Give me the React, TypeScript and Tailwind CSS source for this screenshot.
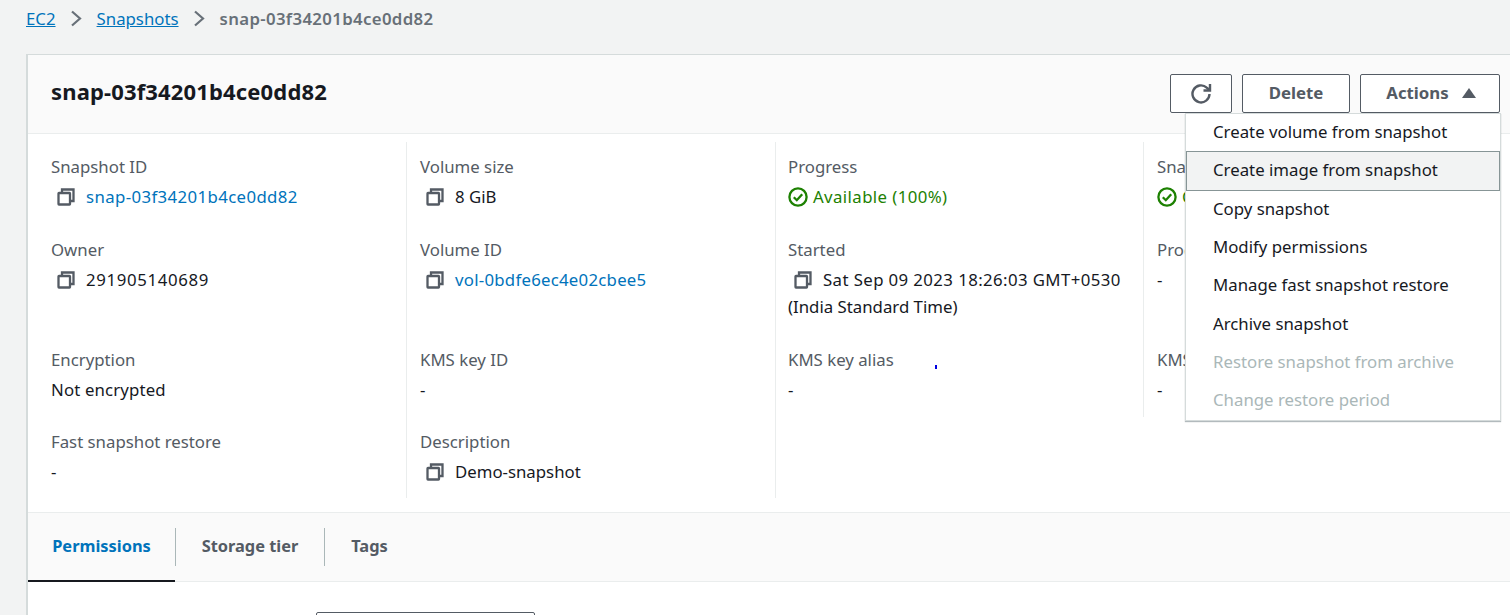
import { ReactNode } from "react"

function CopyIcon() {
    return (
        <svg viewBox="0 0 18 18" className="h-[18px] w-[18px] shrink-0 text-[#545b64]" fill="none" stroke="currentColor" strokeWidth="2.3">
            <rect x="1.5" y="5" width="11.5" height="11.5" rx="0.5" />
            <path d="M5 4V1.5h11.5V13H14" />
        </svg>
    )
}

function CheckIcon() {
    return (
        <svg viewBox="0 0 20 20" className="h-5 w-5 shrink-0 text-[#1d8102]" fill="none" stroke="currentColor" strokeWidth="2.3">
            <circle cx="10" cy="10" r="8.6" />
            <path d="M5.8 10.2l3 3 5.4-6" />
        </svg>
    )
}

function Chevron() {
    return (
        <svg viewBox="0 0 12 17" className="ml-[14px] mr-[15px] mt-[1px] h-[17px] w-3 text-[#687078]" fill="none" stroke="currentColor" strokeWidth="2.2">
            <path d="M2 1.5l8 7-8 7" />
        </svg>
    )
}

function Field({ label, children, className = "" }: { label?: string; children?: ReactNode; className?: string }) {
    return (
        <div className={`pt-[15px] ${className}`}>
            {label && <div className="h-5 leading-5 text-[#545b64]">{label}</div>}
            {children && <div className="mt-[10px] leading-5 text-[#16191f]">{children}</div>}
        </div>
    )
}

function Copyable({ text, link, className = "" }: { text: string; link?: boolean; className?: string }) {
    return (
        <div className="flex items-center pl-[6px]">
            <CopyIcon />
            <span className={`ml-[11px] whitespace-nowrap ${link ? "text-[#0073bb]" : ""} ${className}`}>{text}</span>
        </div>
    )
}

const cell = "border-l border-[#eaeded] pl-[13px]"
const cellThird = "border-l border-[#eaeded] pl-[12px]"

const menuItems = [
    "Create volume from snapshot",
    "Create image from snapshot",
    "Copy snapshot",
    "Modify permissions",
    "Manage fast snapshot restore",
    "Archive snapshot",
    "Restore snapshot from archive",
    "Change restore period",
]

export default function App() {
    return (
        <div className="relative h-[615px] w-[1510px] overflow-hidden bg-[#f2f3f3] font-['Noto_Sans',sans-serif] text-[16.8px]">
            <nav className="flex h-[54px] items-start pl-[26px] pt-[9px] leading-5">
                <span className="text-[#0073bb] underline">EC2</span>
                <Chevron />
                <span className="text-[#0073bb] underline">Snapshots</span>
                <Chevron />
                <span className="font-semibold tracking-[0.35px] text-[#687078]">snap-03f34201b4ce0dd82</span>
            </nav>

            <div className="ml-[26px] h-[561px] border-l-2 border-t border-[#d5dbdb] bg-white">
                <header className="flex h-[79px] items-center justify-between border-b border-[#eaeded] bg-[#fafafa] pl-[23px] pr-[10px]">
                    <h1 className="-mt-[6px] text-[22px] font-bold tracking-[0.15px] text-[#16191f]">snap-03f34201b4ce0dd82</h1>
                    <div className="-mt-[2px] flex gap-[10px] font-bold text-[#545b64]">
                        <button className="flex h-[39px] w-[62px] items-center justify-center rounded-[2px] border border-[#545b64] bg-white">
                            <svg viewBox="0 0 22 22" className="h-[22px] w-[22px]" fill="none" stroke="currentColor" strokeWidth="2.4">
                                <path d="M19.5 12a8.5 8.5 0 1 1-2.8-6.4l2.8 2.4" />
                                <path d="M20 2v6.5h-6.5" />
                            </svg>
                        </button>
                        <button className="h-[39px] w-[108px] rounded-[2px] border border-[#545b64] bg-white pb-px">Delete</button>
                        <button className="flex h-[39px] w-[140px] items-center justify-center gap-[13px] rounded-[2px] border border-[#545b64] bg-white pb-px pl-[2px]">
                            Actions
                            <svg viewBox="0 0 14 10" className="h-[10px] w-[14px]" fill="currentColor">
                                <path d="M7 0l7 10H0z" />
                            </svg>
                        </button>
                    </div>
                </header>

                <div className="mt-2 grid h-[356px] grid-cols-[378px_369px_368px_1fr] grid-rows-[83px_110px_82px_81px]">
                    <Field label="Snapshot ID" className="pl-[23px]"><Copyable text="snap-03f34201b4ce0dd82" link className="tracking-[0.38px]" /></Field>
                    <Field label="Volume size" className={cell}><Copyable text="8 GiB" /></Field>
                    <Field label="Progress" className={cellThird}>
                        <div className="flex items-center gap-[5px] tracking-[0.4px] text-[#1d8102]"><CheckIcon />Available (100%)</div>
                    </Field>
                    <Field label="Snapshot status" className={cell}>
                        <div className="flex items-center gap-[5px] text-[#1d8102]"><CheckIcon />Completed</div>
                    </Field>

                    <Field label="Owner" className="pl-[23px]"><Copyable text="291905140689" className="tracking-[0.65px]" /></Field>
                    <Field label="Volume ID" className={cell}><Copyable text="vol-0bdfe6ec4e02cbee5" link className="tracking-[0.25px]" /></Field>
                    <Field label="Started" className={cellThird}>
                        <Copyable text="Sat Sep 09 2023 18:26:03 GMT+0530" className="tracking-[0.4px]" />
                        <div className="mt-[7px]">(India Standard Time)</div>
                    </Field>
                    <Field label="Product codes" className={cell}>-</Field>

                    <Field label="Encryption" className="pl-[23px]"><span className="tracking-[0.15px]">Not encrypted</span></Field>
                    <Field label="KMS key ID" className={cell}>-</Field>
                    <Field label="KMS key alias" className={cellThird}>-</Field>
                    <Field label="KMS key ARN" className={cell}>-</Field>

                    <Field label="Fast snapshot restore" className="pl-[23px]">-</Field>
                    <Field label="Description" className={cell}><Copyable text="Demo-snapshot" /></Field>
                    <Field className={cell} />
                </div>

                <div className="mt-[14px] flex h-[70px] border-y border-[#eaeded] bg-[#fafafa] text-[16.4px] font-bold">
                    <div className="relative flex w-[147px] items-center justify-center pb-[2px] text-[#0073bb]">
                        Permissions
                        <span className="absolute inset-x-0 -bottom-px h-[2px] bg-[#16191f]" />
                    </div>
                    <div className="my-[15px] w-px bg-[#aab7b8]" />
                    <div className="flex w-[148px] items-center justify-center pb-[2px] text-[#545b64]">Storage tier</div>
                    <div className="my-[15px] w-px bg-[#aab7b8]" />
                    <div className="flex w-[89px] items-center justify-center pb-[2px] text-[#545b64]">Tags</div>
                </div>

                <div className="ml-[288px] mt-[30px] h-6 w-[219px] rounded-[2px] border border-[#545b64] bg-white" />
            </div>

            <div className="absolute left-[1185px] top-[113px] w-[316px] border border-[#d5dbdb] bg-white shadow-[0_1px_1px_rgba(0,28,36,0.3)]">
                {menuItems.map((item, i) => (
                    <div
                        key={item}
                        className={`flex items-center ${
                            i === 1
                                ? "-mt-px h-[39.3px] border border-[#879596] bg-[#f2f3f3] pb-[2px] pl-[26px] text-[#16191f]"
                                : i > 5
                                  ? "h-[38.3px] pb-[3px] pl-[27px] text-[#aab7b8]"
                                  : "h-[38.3px] pb-[3px] pl-[27px] text-[#16191f]"
                        }`}
                    >
                        {item}
                    </div>
                ))}
            </div>

            <div className="absolute left-[935px] top-[365px] h-1 w-[2px] bg-[#0000e0]" />
        </div>
    )
}
